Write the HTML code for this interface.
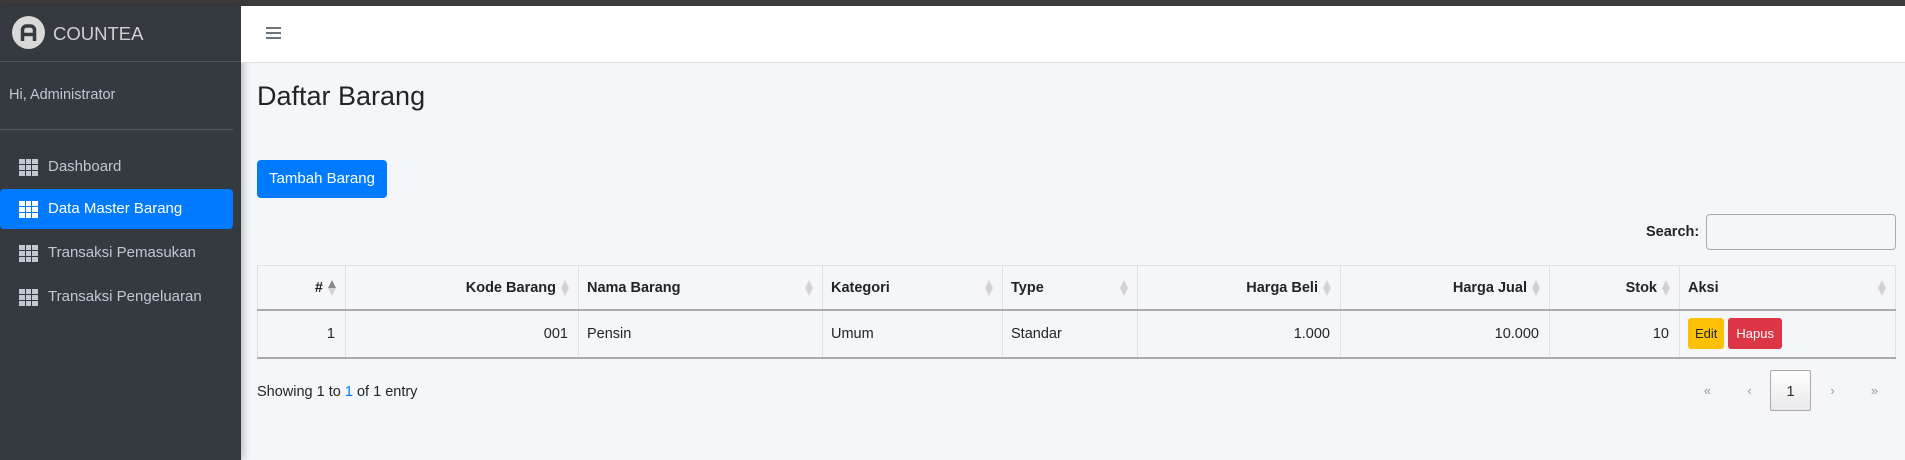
<!DOCTYPE html>
<html><head><meta charset="utf-8"><style>
*{box-sizing:border-box;margin:0;padding:0}
body{width:1905px;height:460px;overflow:hidden;background:#f4f6f9;font-family:"Liberation Sans",sans-serif;color:#212529;position:relative}
.topbar{position:absolute;left:0;top:0;width:1905px;height:6px;background:#3c3c3c}
.side{position:absolute;left:0;top:6px;width:241px;height:454px;background:#343a40;box-shadow:2px 0 8px rgba(0,0,0,.25)}
.brand{height:56px;border-bottom:1px solid #4b545c;position:relative}
.logo{position:absolute;left:12px;top:10px;width:33px;height:33px;border-radius:50%;background:#d9d9d9}
.brand span{position:absolute;left:53px;top:17px;font-size:18.5px;color:#d0d0d0}
.user{position:absolute;left:9px;top:81px;font-size:14.5px;color:#c2c7d0}
.sep{position:absolute;left:0;top:123px;width:233px;border-top:1px solid #4f5962}
.nav{position:absolute;left:0;width:233px;height:40px;font-size:15px;color:#c2c7d0;border-radius:4px}
.nav.act{background:#007bff;color:#fff}
.nav i{position:absolute;left:19px;top:12px;width:19px;height:17px;background:
linear-gradient(90deg,transparent 6px,#343a40 6px,#343a40 7px,transparent 7px,transparent 12px,#343a40 12px,#343a40 13px,transparent 13px),
linear-gradient(0deg,transparent 5px,#343a40 5px,#343a40 6px,transparent 6px,transparent 11px,#343a40 11px,#343a40 12px,transparent 12px),#c2c7d0}
.nav.act i{background:linear-gradient(90deg,transparent 6px,#007bff 6px,#007bff 7px,transparent 7px,transparent 12px,#007bff 12px,#007bff 13px,transparent 13px),
linear-gradient(0deg,transparent 5px,#007bff 5px,#007bff 6px,transparent 6px,transparent 11px,#007bff 11px,#007bff 12px,transparent 12px),#fff}
.nav span{position:absolute;left:48px;top:11px}
.header{position:absolute;left:241px;top:6px;width:1664px;height:57px;background:#fff;border-bottom:1px solid #dee2e6}
.ham{position:absolute;left:25px;top:21px;width:15px;height:2px;background:#6c757d;box-shadow:0 5px 0 #6c757d,0 10px 0 #6c757d}
h1{position:absolute;left:257px;top:81px;font-size:27px;font-weight:400;color:#212529}
.btn{position:absolute;left:257px;top:160px;width:130px;height:38px;background:#007bff;color:#fff;border-radius:4px;font-size:15px;text-align:center;line-height:38px}
.slabel{position:absolute;left:1646px;top:224px;font-size:14.5px;font-weight:bold}
.sinput{position:absolute;left:1706px;top:214px;width:190px;height:36px;border:1px solid #aaa;border-radius:4px;background:#f4f6f9}
table{position:absolute;left:257px;top:265px;width:1639px;border-collapse:collapse;font-size:14.5px}
th,td{border:1px solid #dee2e6;padding:0 8px;position:relative}
th{height:44px;font-weight:bold;border-bottom:2px solid #aaa;padding-top:2px}
td{height:48px;border-bottom:2px solid #aaa}
.r{text-align:right;padding-right:22px}
td.r{padding-right:10px}
.srt{position:absolute;right:8px;top:14px;width:9px;height:16px}
.srt:before{content:"";position:absolute;left:0;top:0;border:4.5px solid transparent;border-bottom:8px solid #d3d3d3;border-top:0}
.srt:after{content:"";position:absolute;left:0;bottom:0;border:4.5px solid transparent;border-top:8px solid #d3d3d3;border-bottom:0}
.srt.up:before{border-bottom-color:#888}
.be{display:inline-block;background:#ffc107;color:#212529;font-size:13px;padding:0 7px;height:31px;line-height:31px;border-radius:3px}
.bh{display:inline-block;background:#dc3545;color:#fff;font-size:13px;padding:0 8px;height:31px;line-height:31px;border-radius:3px;margin-left:4px}
.info{position:absolute;left:257px;top:384px;font-size:14.5px}
.info b{font-weight:normal;color:#007bff}
.pg{position:absolute;top:370px;font-size:13px;color:#999;width:41px;height:41px;line-height:41px;text-align:center}
.pg.cur{border:1px solid #aaa;border-radius:2px;background:linear-gradient(#fff,#e9e9ec);color:#333;font-size:15px}
</style></head><body>
<div class="topbar"></div>
<div class="side">
<div class="brand"><div class="logo"><svg width="33" height="33" viewBox="0 0 33 33"><path d="M10.5 25V14a4 4 0 0 1 4-4h4a4 4 0 0 1 4 4v11M10.5 18.5h12" fill="none" stroke="#343a40" stroke-width="3.5"/></svg></div><span>COUNTEA</span></div>
<div class="user">Hi, Administrator</div>
<div class="sep"></div>
<div class="nav" style="top:141px"><i></i><span>Dashboard</span></div>
<div class="nav act" style="top:183px"><i></i><span>Data Master Barang</span></div>
<div class="nav" style="top:227px"><i></i><span>Transaksi Pemasukan</span></div>
<div class="nav" style="top:271px"><i></i><span>Transaksi Pengeluaran</span></div>
</div>
<div class="header"><div class="ham"></div></div>
<h1>Daftar Barang</h1>
<div class="btn">Tambah Barang</div>
<div class="slabel">Search:</div><div class="sinput"></div>
<table>
<tr><th class="r" style="width:88px">#<i class="srt up"></i></th><th class="r" style="width:233px">Kode Barang<i class="srt"></i></th><th style="text-align:left;width:244px">Nama Barang<i class="srt"></i></th><th style="text-align:left;width:180px">Kategori<i class="srt"></i></th><th style="text-align:left;width:135px">Type<i class="srt"></i></th><th class="r" style="width:203px">Harga Beli<i class="srt"></i></th><th class="r" style="width:209px">Harga Jual<i class="srt"></i></th><th class="r" style="width:130px">Stok<i class="srt"></i></th><th style="text-align:left">Aksi<i class="srt"></i></th></tr>
<tr><td class="r">1</td><td class="r">001</td><td>Pensin</td><td>Umum</td><td>Standar</td><td class="r">1.000</td><td class="r">10.000</td><td class="r">10</td><td><span class="be">Edit</span><span class="bh">Hapus</span></td></tr>
</table>
<div class="info">Showing 1 to <b>1</b> of 1 entry</div>
<div class="pg" style="left:1687px">«</div>
<div class="pg" style="left:1729px">‹</div>
<div class="pg cur" style="left:1770px">1</div>
<div class="pg" style="left:1812px">›</div>
<div class="pg" style="left:1854px">»</div>
</body></html>
